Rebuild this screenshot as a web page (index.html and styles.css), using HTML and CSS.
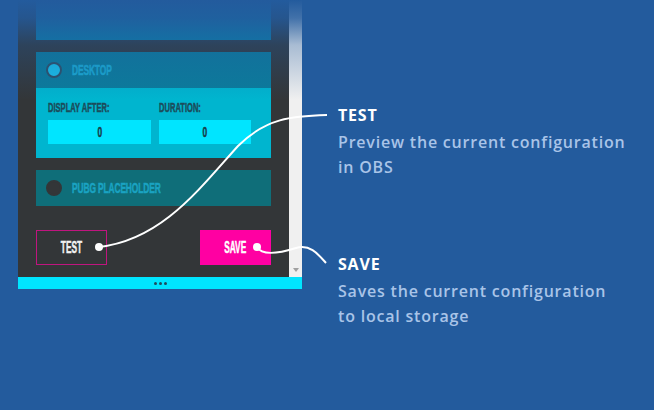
FILE: index.html
```html
<!DOCTYPE html>
<html>
<head>
<meta charset="utf-8">
<link rel="stylesheet" href="styles.css">
</head>
<body>
<div class="stage">
  <div class="window">
    <div class="viewport">
      <div class="content">
        <div class="card card-top"></div>
        <div class="card">
          <div class="card-head">
            <span class="radio radio-on"></span>
            <span class="card-title cond">DESKTOP</span>
          </div>
          <div class="card-body">
            <div class="field field-wide">
              <div class="label"><span class="cond">DISPLAY AFTER:</span></div>
              <div class="input"><span class="cond">0</span></div>
            </div>
            <div class="field field-narrow">
              <div class="label"><span class="cond">DURATION:</span></div>
              <div class="input"><span class="cond">0</span></div>
            </div>
          </div>
        </div>
        <div class="card card-off">
          <div class="card-head">
            <span class="radio radio-off"></span>
            <span class="card-title cond">PUBG PLACEHOLDER</span>
          </div>
        </div>
        <div class="actions">
          <div class="btn btn-test"><span class="cond">TEST</span></div>
          <div class="btn btn-save"><span class="cond">SAVE</span></div>
        </div>
      </div>
      <div class="scrollbar"><span class="arrow"></span></div>
    </div>
    <div class="footer"><span></span><span></span><span></span></div>
    <div class="fade"></div>
  </div>
  <div class="notes">
    <div class="note note-test">
      <div class="note-title">TEST</div>
      <div class="note-text">Preview the current configuration<br>in OBS</div>
    </div>
    <div class="note note-save">
      <div class="note-title">SAVE</div>
      <div class="note-text">Saves the current configuration<br>to local storage</div>
    </div>
  </div>
  <svg class="lines" width="654" height="410" viewBox="0 0 654 410">
    <path d="M99 247 C 162 240, 200 188, 238 146 C 266 118, 292 116, 327 115" fill="none" stroke="#fff" stroke-width="2"/>
    <circle cx="99" cy="247" r="4" fill="#fff"/>
    <path d="M257 247 C 262 256, 280 253, 296 248 C 310 244, 318 254, 326 263" fill="none" stroke="#fff" stroke-width="2"/>
    <circle cx="257" cy="247" r="4" fill="#fff"/>
  </svg>
</div>
</body>
</html>
```
FILE: styles.css
```css
html, body {
  margin: 0;
  padding: 0;
}
body {
  background: #235b9d;
  width: 654px;
  height: 410px;
  overflow: hidden;
}
.stage {
  position: relative;
  width: 654px;
  height: 410px;
  display: flex;
}
.window {
  position: relative;
  margin-left: 18px;
  width: 284px;
  height: 289px;
  display: flex;
  flex-direction: column;
}
.viewport {
  display: flex;
  height: 277px;
  background: #333638;
}
.content {
  width: 271px;
  box-sizing: border-box;
  padding: 0 18px;
  display: flex;
  flex-direction: column;
}
.scrollbar {
  position: relative;
  width: 13px;
  background: #f0f0f0;
}
.arrow {
  position: absolute;
  left: 4px;
  bottom: 5px;
  width: 0;
  height: 0;
  border-left: 3px solid transparent;
  border-right: 3px solid transparent;
  border-top: 4px solid #a0a0a0;
}
.footer {
  height: 12px;
  background: #00e5ff;
  display: flex;
  justify-content: center;
  align-items: center;
  gap: 2px;
}
.footer span {
  width: 3px;
  height: 3px;
  border-radius: 50%;
  background: #1d4b5e;
}
.fade {
  position: absolute;
  left: 0;
  top: 0;
  width: 284px;
  height: 100px;
  background: linear-gradient(to bottom, #235b9d 0%, rgba(35, 91, 157, 0.85) 18%, rgba(35, 91, 157, 0.35) 45%, rgba(35, 91, 157, 0) 100%);
  pointer-events: none;
}
.cond {
  display: inline-block;
  font-family: "Liberation Sans", Arial, sans-serif;
  font-weight: bold;
  -webkit-text-stroke: 0.5px currentColor;
  transform: scaleX(0.6);
  transform-origin: left center;
  white-space: nowrap;
}
.card {
  margin-top: 12px;
}
.card-top {
  margin-top: 0;
  height: 40px;
  background: #0a7fa8;
}
.card-head {
  height: 36px;
  background: #0b7b9b;
  display: flex;
  align-items: center;
  padding-left: 10px;
  gap: 10px;
}
.card-off .card-head {
  background: #0f6e79;
}
.radio {
  width: 12px;
  height: 12px;
  border-radius: 50%;
  border: 2px solid #2e4f66;
  background: #19c0ea;
}
.radio-off {
  background: #333638;
  border-color: #333638;
}
.card-title {
  color: #1aaad3;
  font-size: 14px;
  letter-spacing: -0.2px;
}
.card-off .card-title {
  color: #1aa3c2;
}
.card-body {
  background: #00b5cf;
  height: 70px;
  box-sizing: border-box;
  padding: 12px 12px 0 12px;
  display: flex;
  gap: 8px;
}
.field-wide { width: 103px; }
.field-narrow { width: 92px; }
.label {
  color: #1c4c5a;
  font-size: 13.5px;
  height: 20px;
  line-height: 16px;
}
.label .cond {
  transform: scaleX(0.56);
}
.input {
  height: 24px;
  background: #00e5ff;
  color: #173e4c;
  font-size: 14px;
  line-height: 24px;
  display: flex;
  justify-content: center;
}
.input .cond {
  transform-origin: center center;
}
.actions {
  margin-top: 24px;
  display: flex;
  justify-content: space-between;
}
.btn {
  width: 71px;
  height: 35px;
  box-sizing: border-box;
  font-size: 16px;
  color: #f2f2f2;
  display: flex;
  align-items: center;
  justify-content: center;
}
.btn .cond {
  transform: scaleX(0.52);
  transform-origin: center center;
}
.btn-test {
  border: 1px solid #c0157f;
}
.btn-save {
  background: #ff00a2;
  color: #ffffff;
}
.notes {
  margin-left: 36px;
  display: flex;
  flex-direction: column;
  font-family: "Open Sans", sans-serif;
  font-weight: 600;
  letter-spacing: 0.8px;
}
.note-test { margin-top: 104px; }
.note-save { margin-top: 73px; }
.note-title {
  color: #ffffff;
  font-size: 16px;
  font-weight: 700;
  line-height: 22px;
}
.note-text {
  margin-top: 4px;
  color: #a9c4e8;
  font-size: 16px;
  line-height: 25px;
}
.lines {
  position: absolute;
  left: 0;
  top: 0;
  pointer-events: none;
}
```
